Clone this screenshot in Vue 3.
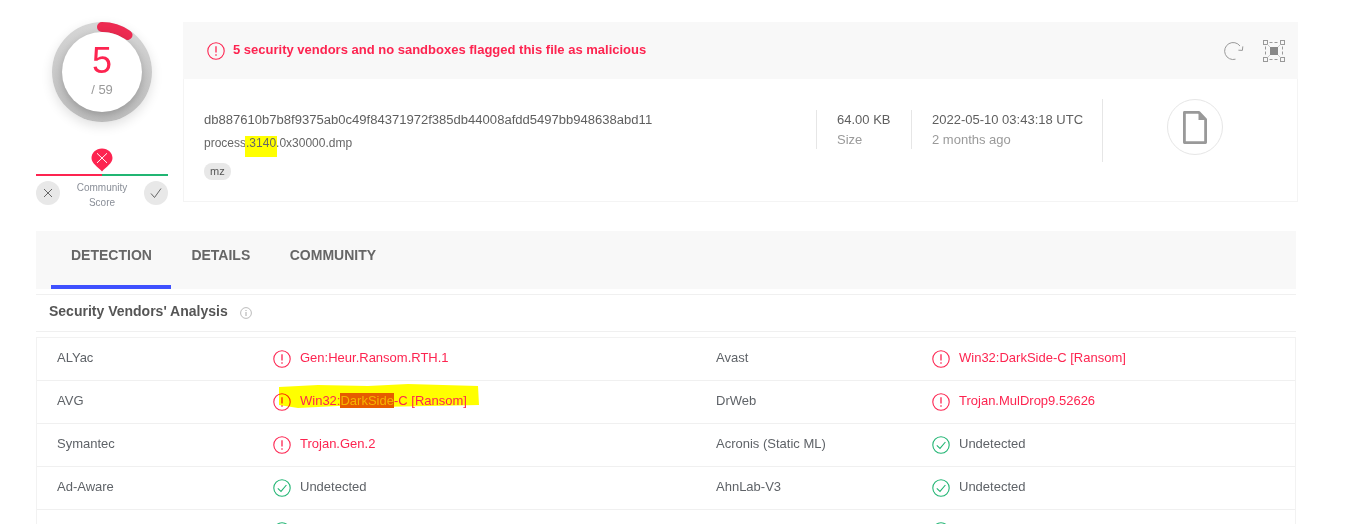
<template>
  <div class="page">
    <section class="top">
      <div class="score">
        <div class="gauge">
          <svg class="gauge-arc" width="100" height="100" viewBox="0 0 100 100">
            <path d="M50 5 A45 45 0 0 1 75.5 13" fill="none" stroke="#ed2a51" stroke-width="10" stroke-linecap="round" />
          </svg>
          <div class="gauge-face">
            <div class="positives">5</div>
            <div class="total">/ 59</div>
          </div>
        </div>
        <div class="community">
          <svg class="pin" width="22" height="24" viewBox="0 0 22 25" preserveAspectRatio="none">
            <path d="M11 0.5 C17 0.5 21.5 5 21.5 10.5 C21.5 16 15 20 11 24.5 C7 20 0.5 16 0.5 10.5 C0.5 5 5 0.5 11 0.5 Z" fill="#fd2450" />
            <path d="M6 5.5 L16 15.5 M16 5.5 L6 15.5" stroke="#fff" stroke-width="1" fill="none" />
          </svg>
          <div class="vote-bar"><span class="bad"></span><span class="good"></span></div>
          <div class="vote-row">
            <span class="vote">
              <svg width="12" height="12" viewBox="0 0 12 12"><path d="M2 2 L10 10 M10 2 L2 10" stroke="#666" stroke-width="1" fill="none" /></svg>
            </span>
            <span class="vote-label">Community<br />Score</span>
            <span class="vote">
              <svg width="12" height="12" viewBox="0 0 12 12"><path d="M1 6.5 L4.5 10.5 L11 1.5" stroke="#666" stroke-width="1" fill="none" /></svg>
            </span>
          </div>
        </div>
      </div>

      <div class="card">
        <div class="card-head">
          <div class="verdict">
            <svg width="18" height="18" viewBox="0 0 18 18">
              <circle cx="9" cy="9" r="8.2" fill="none" stroke="#fd2450" stroke-width="1.1" />
              <path d="M9 4.3 V10.6 M9 12.2 V13.7" stroke="#fd2450" stroke-width="1.3" />
            </svg>
            <span class="verdict-text">5 security vendors and no sandboxes flagged this file as malicious</span>
          </div>
          <div class="head-tools">
            <svg width="20" height="20" viewBox="0 0 20 20">
              <path d="M16 5 A8.5 8.5 0 1 0 11.5 18.2" fill="none" stroke="#999" stroke-width="1" />
              <path d="M14.4 9.2 L18.4 9.4 L18.8 5.4" fill="none" stroke="#999" stroke-width="1" />
            </svg>
            <svg width="24" height="24" viewBox="0 0 24 24">
              <g fill="none" stroke="#999" stroke-width="1">
                <rect x="1.5" y="1.5" width="4" height="4" />
                <rect x="18.5" y="1.5" width="4" height="4" />
                <rect x="1.5" y="18.5" width="4" height="4" />
                <rect x="18.5" y="18.5" width="4" height="4" />
                <path d="M7.5 3.5 H16.5 M7.5 20.5 H16.5 M3.5 7.5 V16.5 M20.5 7.5 V16.5" stroke-dasharray="3 2" />
              </g>
              <path d="M5.5 5.5 L18.5 18.5 M18.5 5.5 L5.5 18.5" stroke="#ccc" stroke-width="1" fill="none" />
              <rect x="8" y="8" width="8" height="8" fill="#888" />
            </svg>
          </div>
        </div>
        <div class="card-body">
          <div class="file-id">
            <div class="hash">db887610b7b8f9375ab0c49f84371972f385db44008afdd5497bb948638abd11</div>
            <div class="file-name">process<mark>.3140</mark>.0x30000.dmp</div>
            <span class="tag">mz</span>
          </div>
          <div class="facts">
            <div class="fact size">
              <div>64.00 KB</div>
              <div class="muted">Size</div>
            </div>
            <div class="fact date">
              <div>2022-05-10 03:43:18 UTC</div>
              <div class="muted">2 months ago</div>
            </div>
          </div>
          <div class="file-type">
            <div class="type-circle">
              <svg width="24" height="33" viewBox="0 0 24 33">
                <path d="M1.4 1.4 H16 L22.6 8.5 V31.6 H1.4 Z" fill="#fff" stroke="#999" stroke-width="2.8" stroke-linejoin="round" />
                <path d="M15.5 1 V9 H23 Z" fill="#999" />
              </svg>
            </div>
          </div>
        </div>
      </div>
    </section>

    <nav class="tabs">
      <a v-for="tab in tabs" :key="tab" class="tab" :class="{ active: tab === 'DETECTION' }">{{ tab }}</a>
    </nav>

    <div class="section-title">
      <span>Security Vendors' Analysis</span>
      <svg width="12" height="12" viewBox="0 0 12 12">
        <circle cx="6" cy="6" r="5.4" fill="none" stroke="#aaa" stroke-width="0.8" />
        <path d="M6 5 V9 M6 3 V4" stroke="#aaa" stroke-width="1" />
      </svg>
    </div>

    <div class="vendors">
      <div v-for="(row, i) in rows" :key="i" class="row">
        <template v-for="(cell, j) in row" :key="j">
          <div class="vendor">{{ cell.name }}</div>
          <div class="result" :class="{ bad: cell.bad }">
            <svg v-if="cell.bad" width="18" height="18" viewBox="0 0 18 18">
              <circle cx="9" cy="9" r="8.2" fill="none" stroke="#fd2450" stroke-width="1.1" />
              <path d="M9 4.3 V10.6 M9 12.2 V13.7" stroke="#fd2450" stroke-width="1.3" />
            </svg>
            <svg v-else width="18" height="18" viewBox="0 0 18 18">
              <circle cx="9" cy="9" r="8.2" fill="none" stroke="#21b573" stroke-width="1.1" />
              <path d="M4.8 9.3 L8 12.4 L13.4 6" fill="none" stroke="#21b573" stroke-width="1.1" />
            </svg>
            <span class="label">
              <span v-if="cell.mark">Win32:<span class="dark">DarkSide</span>-C [Ransom]</span>
              <span v-else>{{ cell.text }}</span>
            </span>
          </div>
        </template>
      </div>
      <svg class="marker" width="202" height="26" viewBox="0 0 202 26">
        <path d="M1 3 L40 1 L90 2 L130 0 L200 2 L201 21 L150 22 L100 23 L60 22 L20 24 L1 21 Z" fill="#ffff00" />
      </svg>
    </div>
  </div>
</template>

<script setup>
const tabs = ['DETECTION', 'DETAILS', 'COMMUNITY']

const rows = [
  [
    { name: 'ALYac', text: 'Gen:Heur.Ransom.RTH.1', bad: true },
    { name: 'Avast', text: 'Win32:DarkSide-C [Ransom]', bad: true },
  ],
  [
    { name: 'AVG', text: 'Win32:DarkSide-C [Ransom]', bad: true, mark: true },
    { name: 'DrWeb', text: 'Trojan.MulDrop9.52626', bad: true },
  ],
  [
    { name: 'Symantec', text: 'Trojan.Gen.2', bad: true },
    { name: 'Acronis (Static ML)', text: 'Undetected' },
  ],
  [
    { name: 'Ad-Aware', text: 'Undetected' },
    { name: 'AhnLab-V3', text: 'Undetected' },
  ],
  // next row only shows the tops of its icons at the fold
  [
    { name: '', text: '' },
    { name: '', text: '' },
  ],
]
</script>

<style>
html, body { background: #fff; overflow: hidden; height: 524px; }
</style>

<style scoped>
.page { width: 1347px; height: 524px; overflow: hidden; font-family: "Liberation Sans", Arial, sans-serif; font-size: 13px; color: #5f6368; box-sizing: border-box; padding: 22px 0 0 36px; }
.top { display: flex; gap: 15px; height: 180px; }
.score { width: 132px; display: flex; flex-direction: column; align-items: center; }
.gauge { flex: none; width: 100px; height: 100px; border-radius: 50%; background: linear-gradient(#d6d6d6, #bdbdbd); position: relative; display: flex; align-items: center; justify-content: center; box-shadow: 0 4px 12px rgba(0,0,0,.12); }
.gauge-arc { position: absolute; left: 0; top: 0; }
.gauge-face { width: 80px; height: 80px; border-radius: 50%; background: #fff; position: relative; text-align: center; box-shadow: 0 3px 8px rgba(0,0,0,.22); }
.positives { font-size: 36px; line-height: 42px; color: #fd2450; margin-top: 8px; }
.total { font-size: 13px; line-height: 16px; color: #9a9a9a; }
.community { flex: none; width: 132px; margin-top: 26px; display: flex; flex-direction: column; align-items: center; }
.pin { display: block; }
.vote-bar { width: 132px; height: 2px; display: flex; margin-top: 2px; }
.vote-bar span { flex: 1; }
.vote-bar .bad { background: #fd2450; }
.vote-bar .good { background: #21b573; }
.vote-row { width: 132px; display: flex; align-items: center; justify-content: space-between; margin-top: 4px; }
.vote { width: 24px; height: 24px; border-radius: 50%; background: #e8e8e8; display: flex; align-items: center; justify-content: center; margin-top: -4px; }
.vote-label { font-size: 10px; line-height: 15px; color: #8a8f98; text-align: center; }
.card { width: 1115px; display: flex; flex-direction: column; }
.card-head { height: 57px; background: #f8f8f8; display: flex; align-items: center; justify-content: space-between; padding: 0 12px 0 24px; box-sizing: border-box; }
.verdict { display: flex; align-items: center; gap: 8px; color: #fd2450; font-size: 13px; font-weight: 700; }
.verdict-text { margin-top: -3px; }
.head-tools { display: flex; align-items: center; gap: 18px; }
.card-body { flex: 1; border: 1px solid #f4f4f4; border-top: 0; display: flex; padding: 20px 0 0 20px; }
.file-id { width: 612px; }
.hash { font-size: 13.05px; line-height: 20px; color: #5f5f5f; margin-top: 11px; }
.file-name { font-size: 12px; line-height: 20px; margin-top: 3px; color: #666; }
mark { background: #ffff00; color: inherit; padding: 0 1px 7px; margin: 0 -1px; }
.tag { display: inline-block; margin-top: 10px; background: #e8e8e8; border-radius: 8px; font-size: 11px; line-height: 17px; padding: 0 6px; color: #555; }
.facts { display: flex; height: 39px; margin-top: 11px; line-height: 20px; font-size: 13px; color: #5f5f5f; }
.fact { border-left: 1px solid #e6e6e6; padding-left: 20px; }
.size { width: 74px; }
.date { width: 170px; }
.muted { color: #9a9a9a; }
.file-type { border-left: 1px solid #e6e6e6; height: 63px; padding-left: 64px; }
.type-circle { width: 54px; height: 54px; border: 1px solid #e6e6e6; border-radius: 50%; display: flex; align-items: center; justify-content: center; }
.tabs { margin-top: 29px; width: 1260px; height: 58px; background: #f8f8f8; display: flex; padding-left: 15px; box-sizing: border-box; }
.tab { padding: 14px 19.5px 0 20px; font-size: 14px; line-height: 20px; font-weight: 700; color: #666; box-sizing: border-box; }
.tab.active { border-bottom: 4px solid #3f51ff; }
.section-title { margin-top: 5px; width: 1260px; height: 38px; box-sizing: border-box; border-top: 1px solid #f0f0f0; border-bottom: 1px solid #f0f0f0; display: flex; align-items: center; gap: 12px; padding: 0 0 5px 13px; font-size: 14px; font-weight: 700; color: #555; }
.section-title svg { margin-top: 5px; }
.vendors { margin-top: 5px; width: 1260px; border: 1px solid #f2f2f2; box-sizing: border-box; position: relative; }
.row { display: grid; grid-template-columns: 236px 423px 236px 1fr; height: 43px; border-bottom: 1px solid #f0f0f0; box-sizing: border-box; align-items: center; font-size: 13px; }
.vendor { padding: 0 0 3px 20px; color: #5f6368; }
.result { display: flex; align-items: center; gap: 9px; color: #5f6368; }
.result svg { flex: none; }
.result.bad { color: #fd2450; }
.label { position: relative; z-index: 2; padding-bottom: 3px; }
.dark { background: #e65c00; color: #f5b400; }
.marker { position: absolute; left: 241px; top: 46px; z-index: 0; mix-blend-mode: multiply; pointer-events: none; }
</style>
